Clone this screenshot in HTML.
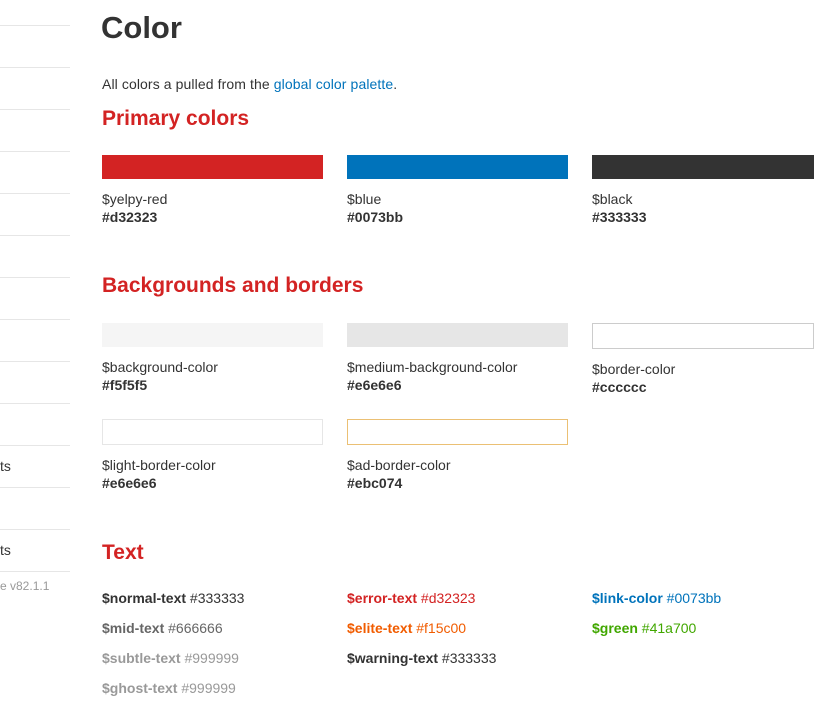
<!DOCTYPE html>
<html><head><meta charset="utf-8"><style>
body{margin:0;width:832px;height:728px;overflow:hidden;background:#fff;font-family:"Liberation Sans",Arial,sans-serif;color:#333;position:relative}
.a{position:absolute;white-space:nowrap}
.l{position:absolute;left:0;width:70px;height:1px;background:#e6e6e6}
.sw{position:absolute;width:220px;height:24px;box-sizing:border-box}
.n{font-size:14px;line-height:18px}
.h{font-size:14px;font-weight:bold;line-height:18px}
h2{margin:0;font-size:21px;color:#d32323;font-weight:bold;position:absolute}
.t{font-size:14px;position:absolute;white-space:nowrap}
.t b{font-weight:bold}
</style></head><body>
<div class="l" style="top:25px"></div><div class="l" style="top:67px"></div><div class="l" style="top:109px"></div><div class="l" style="top:151px"></div><div class="l" style="top:193px"></div><div class="l" style="top:235px"></div><div class="l" style="top:277px"></div><div class="l" style="top:319px"></div><div class="l" style="top:361px"></div><div class="l" style="top:403px"></div><div class="l" style="top:445px"></div><div class="l" style="top:487px"></div><div class="l" style="top:529px"></div><div class="l" style="top:571px"></div>
<div class="a" style="left:0;top:458px;font-size:14px">ts</div>
<div class="a" style="left:0;top:542px;font-size:14px">ts</div>
<div class="a" style="left:0;top:579px;font-size:12px;color:#999">e v82.1.1</div>

<div class="a" style="left:101px;top:10px;font-size:31px;font-weight:bold;color:#333">Color</div>
<div class="a" style="left:102px;top:76px;font-size:14px;letter-spacing:0.1px">All colors a pulled from the <span style="color:#0073bb">global color palette</span>.</div>
<h2 style="left:102px;top:107px">Primary colors</h2>

<div class="sw" style="left:102px;top:155px;background:#d32323;width:221px"></div>
<div class="sw" style="left:347px;top:155px;background:#0073bb;width:221px"></div>
<div class="sw" style="left:592px;top:155px;background:#333;width:222px"></div>
<div class="a" style="left:102px;top:190px"><div class="n">$yelpy-red</div><div class="h">#d32323</div></div>
<div class="a" style="left:347px;top:190px"><div class="n">$blue</div><div class="h">#0073bb</div></div>
<div class="a" style="left:592px;top:190px"><div class="n">$black</div><div class="h">#333333</div></div>

<h2 style="left:102px;top:274px">Backgrounds and borders</h2>
<div class="sw" style="left:102px;top:323px;background:#f5f5f5;width:221px"></div>
<div class="sw" style="left:347px;top:323px;background:#e6e6e6;width:221px"></div>
<div class="sw" style="left:592px;top:323px;height:26px;border:1px solid #ccc;width:222px"></div>
<div class="a" style="left:102px;top:358px"><div class="n">$background-color</div><div class="h">#f5f5f5</div></div>
<div class="a" style="left:347px;top:358px"><div class="n">$medium-background-color</div><div class="h">#e6e6e6</div></div>
<div class="a" style="left:592px;top:360px"><div class="n">$border-color</div><div class="h">#cccccc</div></div>
<div class="sw" style="left:102px;top:419px;height:26px;border:1px solid #e6e6e6;width:221px"></div>
<div class="sw" style="left:347px;top:419px;height:26px;border:1px solid #ebc074;width:221px"></div>
<div class="a" style="left:102px;top:456px"><div class="n">$light-border-color</div><div class="h">#e6e6e6</div></div>
<div class="a" style="left:347px;top:456px"><div class="n">$ad-border-color</div><div class="h">#ebc074</div></div>

<h2 style="left:102px;top:541px">Text</h2>
<div class="t" style="left:102px;top:590px;color:#333"><b>$normal-text</b> #333333</div>
<div class="t" style="left:102px;top:620px;color:#666"><b>$mid-text</b> #666666</div>
<div class="t" style="left:102px;top:650px;color:#999"><b>$subtle-text</b> #999999</div>
<div class="t" style="left:102px;top:680px;color:#999"><b>$ghost-text</b> #999999</div>
<div class="t" style="left:347px;top:590px;color:#d32323"><b>$error-text</b> #d32323</div>
<div class="t" style="left:347px;top:620px;color:#f15c00"><b>$elite-text</b> #f15c00</div>
<div class="t" style="left:347px;top:650px;color:#333"><b>$warning-text</b> #333333</div>
<div class="t" style="left:592px;top:590px;color:#0073bb"><b>$link-color</b> #0073bb</div>
<div class="t" style="left:592px;top:620px;color:#41a700"><b>$green</b> #41a700</div>
</body></html>
